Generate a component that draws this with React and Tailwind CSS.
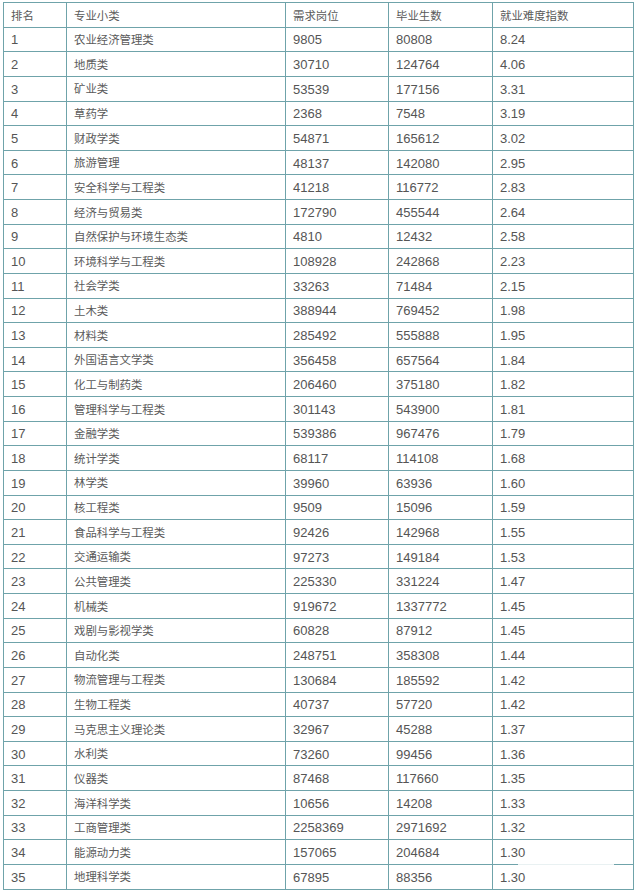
const rows = [
  [1, '农业经济管理类', '9805', '80808', '8.24'],
  [2, '地质类', '30710', '124764', '4.06'],
  [3, '矿业类', '53539', '177156', '3.31'],
  [4, '草药学', '2368', '7548', '3.19'],
  [5, '财政学类', '54871', '165612', '3.02'],
  [6, '旅游管理', '48137', '142080', '2.95'],
  [7, '安全科学与工程类', '41218', '116772', '2.83'],
  [8, '经济与贸易类', '172790', '455544', '2.64'],
  [9, '自然保护与环境生态类', '4810', '12432', '2.58'],
  [10, '环境科学与工程类', '108928', '242868', '2.23'],
  [11, '社会学类', '33263', '71484', '2.15'],
  [12, '土木类', '388944', '769452', '1.98'],
  [13, '材料类', '285492', '555888', '1.95'],
  [14, '外国语言文学类', '356458', '657564', '1.84'],
  [15, '化工与制药类', '206460', '375180', '1.82'],
  [16, '管理科学与工程类', '301143', '543900', '1.81'],
  [17, '金融学类', '539386', '967476', '1.79'],
  [18, '统计学类', '68117', '114108', '1.68'],
  [19, '林学类', '39960', '63936', '1.60'],
  [20, '核工程类', '9509', '15096', '1.59'],
  [21, '食品科学与工程类', '92426', '142968', '1.55'],
  [22, '交通运输类', '97273', '149184', '1.53'],
  [23, '公共管理类', '225330', '331224', '1.47'],
  [24, '机械类', '919672', '1337772', '1.45'],
  [25, '戏剧与影视学类', '60828', '87912', '1.45'],
  [26, '自动化类', '248751', '358308', '1.44'],
  [27, '物流管理与工程类', '130684', '185592', '1.42'],
  [28, '生物工程类', '40737', '57720', '1.42'],
  [29, '马克思主义理论类', '32967', '45288', '1.37'],
  [30, '水利类', '73260', '99456', '1.36'],
  [31, '仪器类', '87468', '117660', '1.35'],
  [32, '海洋科学类', '10656', '14208', '1.33'],
  [33, '工商管理类', '2258369', '2971692', '1.32'],
  [34, '能源动力类', '157065', '204684', '1.30'],
  [35, '地理科学类', '67895', '88356', '1.30'],
  ['', '', '', '', ''],
];

const widths = ['w-[63px]', 'w-[219px]', 'w-[103px]', 'w-[104px]', 'w-[141px]'];

function Row({ cells }) {
  return (
    <div className="flex h-[24.63px]">
      {cells.map((c, i) => {
        const isNum = /^[\d.]+$/.test(String(c));
        return (
          <div
            key={i}
            className={`${widths[i]} shrink-0 border-r border-b border-[#6fa3aa] pl-[7px] flex items-center ${
              isNum ? 'text-[13px] text-[#555] pt-[1px]' : 'text-[11.4px] text-[#5a5a5a] pt-[3px]'
            }`}
          >
            {c}
          </div>
        );
      })}
    </div>
  );
}

export default function App() {
  return (
    <div className="relative w-[640px] h-[890px] overflow-hidden bg-white">
      <div
        className="ml-[3px] mt-[2px] w-[631px] border-l border-t border-[#6fa3aa] leading-none"
        style={{ fontFamily: '"Liberation Sans", "Noto Sans CJK SC", sans-serif' }}
      >
        <Row cells={['排名', '专业小类', '需求岗位', '毕业生数', '就业难度指数']} />
        {rows.map((r, i) => (
          <Row key={i} cells={r} />
        ))}
      </div>
      <div className="absolute left-[518px] top-[861px] h-[4px] w-[96px] bg-white/85" />
    </div>
  );
}
